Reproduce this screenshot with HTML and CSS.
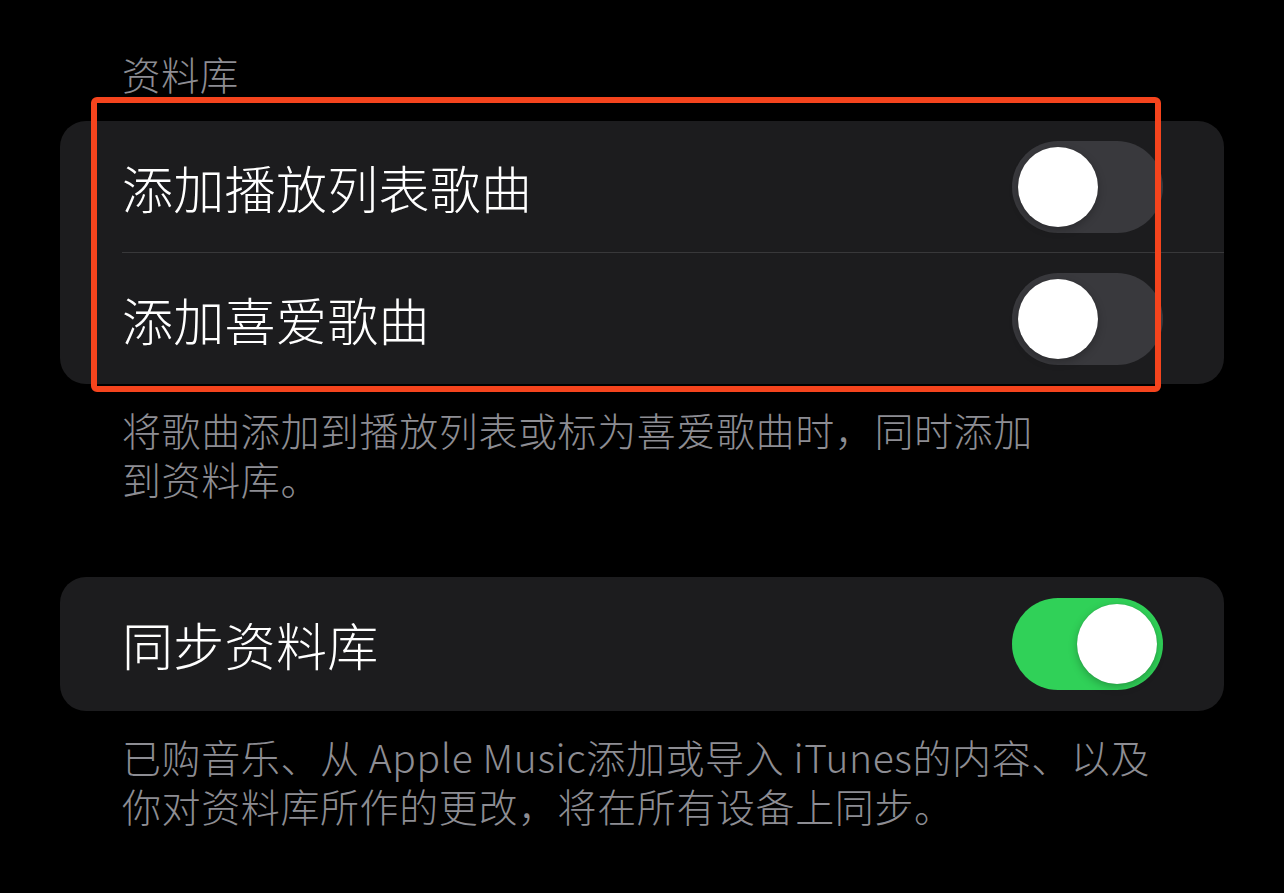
FILE: index.html
```html
<!DOCTYPE html>
<html lang="zh-CN">
<head>
<meta charset="utf-8">
<title>资料库</title>
<link rel="stylesheet" href="styles.css">
</head>
<body>
<div class="page">
  <div class="group group-first">
    <div class="section-header">资料库</div>
    <div class="card">
      <div class="row">
        <div class="row-inner has-sep">
          <span class="row-title">添加播放列表歌曲</span>
          <span class="toggle"><span class="knob"></span></span>
        </div>
      </div>
      <div class="row">
        <div class="row-inner">
          <span class="row-title">添加喜爱歌曲</span>
          <span class="toggle"><span class="knob"></span></span>
        </div>
      </div>
    </div>
    <div class="highlight"></div>
    <div class="footer">
      <div class="footer-line">将歌曲添加到播放列表或标为喜爱歌曲时，同时添加</div>
      <div class="footer-line">到资料库。</div>
    </div>
  </div>

  <div class="group group-second">
    <div class="card">
      <div class="row">
        <div class="row-inner row-tall">
          <span class="row-title">同步资料库</span>
          <span class="toggle on"><span class="knob"></span></span>
        </div>
      </div>
    </div>
    <div class="footer">
      <div class="footer-line">已购音乐、从 Apple Music添加或导入 iTunes的内容、以及</div>
      <div class="footer-line">你对资料库所作的更改，将在所有设备上同步。</div>
    </div>
  </div>
</div>
</body>
</html>
```

FILE: styles.css
```css
html, body {
  margin: 0;
  padding: 0;
  background: #000;
}

body {
  font-family: "Noto Sans CJK SC", "Noto Sans", sans-serif;
  font-weight: 300;
  color: #fff;
  width: 1284px;
  height: 893px;
  overflow: hidden;
}

.page {
  padding: 0 60px;
}

.group {
  position: relative;
}

.group-first {
  padding-top: 49px;
}

.group-second {
  margin-top: 74px;
}

.section-header {
  padding-left: 62px;
  font-size: 38.5px;
  line-height: 48px;
  letter-spacing: 0.4px;
  color: #8d8d93;
  margin-bottom: 24px;
}

.card {
  background: #1c1c1e;
  border-radius: 26px;
  overflow: hidden;
}

.row {
  padding-left: 62px;
}

.row-inner {
  display: flex;
  align-items: center;
  justify-content: space-between;
  height: 131px;
  padding-right: 61px;
}

.row-inner.has-sep {
  border-bottom: 1px solid #38383a;
}

.row-inner.row-tall {
  height: 134px;
}

.row-title {
  font-size: 51px;
  line-height: 60px;
  letter-spacing: 0.3px;
  color: #fff;
}

.toggle {
  position: relative;
  width: 151px;
  height: 92px;
  border-radius: 46px;
  background: #39393d;
  flex: none;
}

.toggle .knob {
  position: absolute;
  top: 6px;
  left: 6px;
  width: 80px;
  height: 80px;
  border-radius: 50%;
  background: #fff;
  box-shadow: 0 3px 8px rgba(0, 0, 0, 0.25), 0 0 1px rgba(0, 0, 0, 0.2);
}

.toggle.on {
  background: #30d158;
}

.toggle.on .knob {
  left: 65px;
}

.footer {
  margin-top: 21px;
  padding-left: 62px;
  color: #8d8d93;
}

.footer-line {
  font-size: 39px;
  line-height: 49px;
  letter-spacing: 0.6px;
  white-space: nowrap;
}

.highlight {
  position: absolute;
  left: 31px;
  top: 97px;
  width: 1058px;
  height: 283px;
  border: 6px solid #f5441d;
  border-radius: 6px;
  pointer-events: none;
}
```
